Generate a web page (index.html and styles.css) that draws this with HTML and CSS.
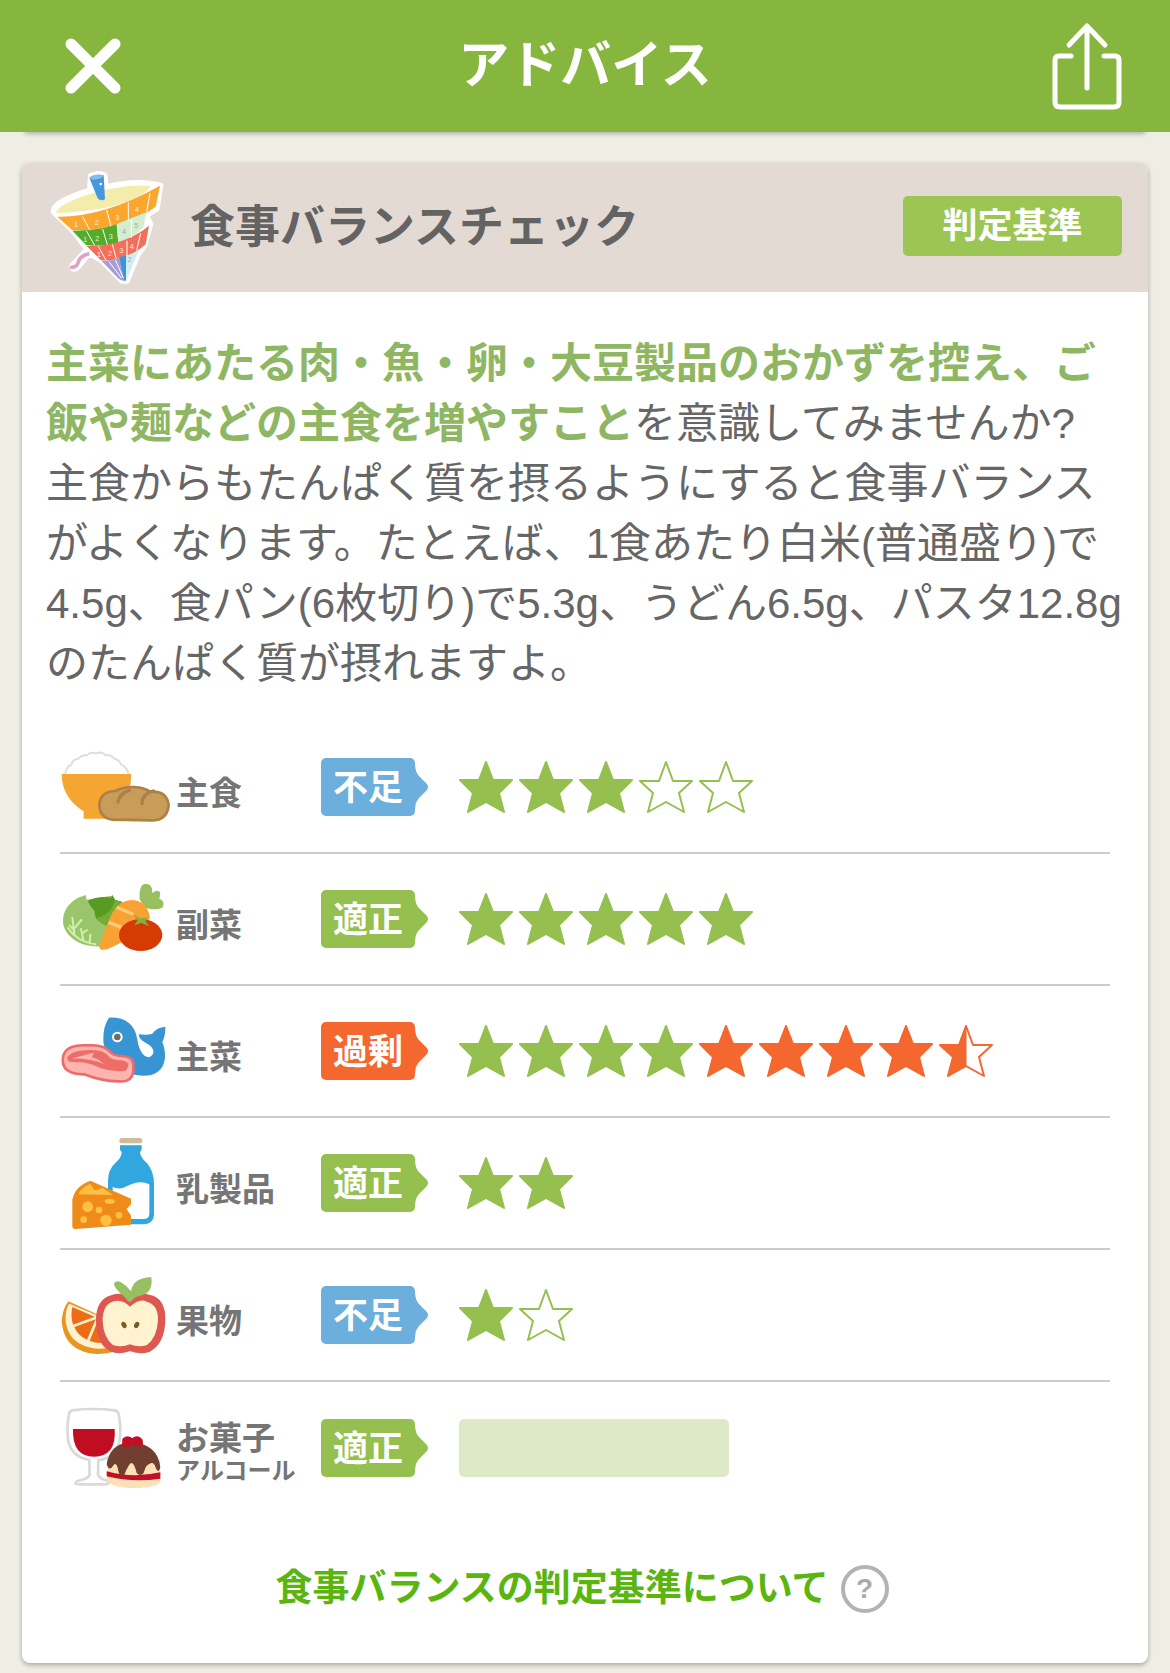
FILE: index.html
```
<!DOCTYPE html>
<html lang="ja">
<head>
  <meta charset="UTF-8">
  <meta name="viewport" content="width=device-width, initial-scale=1">
  <title>アドバイス</title>
  <link rel="stylesheet" href="styles.css">
</head>
<body>
  <!-- star shapes shared by every row -->
  <svg class="defs" width="0" height="0" aria-hidden="true">
    <symbol id="star" viewBox="0 0 54 54">
      <path d="M27 2 34 20H53L40 33 45 52 27 42 9 52 14 33 1 20H20Z" fill="currentColor" stroke="currentColor" stroke-width="2" stroke-linejoin="round"/>
    </symbol>
    <symbol id="star-empty" viewBox="0 0 54 54">
      <path d="M27 2 34 21H53L40 33 45 52 27 42 9 52 14 33 1 21H20Z" fill="none" stroke="currentColor" stroke-width="2" stroke-linejoin="round"/>
    </symbol>
    <symbol id="star-half" viewBox="0 0 54 54">
      <path d="M27 2 34 21H53L40 33 45 52 27 42 9 52 14 33 1 21H20Z" fill="none" stroke="currentColor" stroke-width="2" stroke-linejoin="round"/>
      <path d="M27 2V42L9 52 14 33 1 21H20Z" fill="currentColor" stroke="currentColor" stroke-linejoin="round"/>
    </symbol>
  </svg>

  <header class="navbar">
    <button class="nav-btn" type="button" aria-label="閉じる">
      <svg width="56" height="56" viewBox="0 0 56 56"><path d="M6 6 50 50M50 6 6 50" stroke="#fff" stroke-width="11" stroke-linecap="round"/></svg>
    </button>
    <h1>アドバイス</h1>
    <button class="nav-btn share" type="button" aria-label="共有">
      <svg width="70" height="88" viewBox="0 0 70 88" fill="none" stroke="#fff" stroke-width="5" stroke-linecap="round" stroke-linejoin="round"><path d="M19 34H7Q3 34 3 38V80Q3 85 8 85H62Q67 85 67 80V38Q67 34 63 34H52"/><path d="M35 66V4M17 23 35 4 53 23"/></svg>
    </button>
  </header>
  <div class="card-tail"></div>

  <main class="card">
    <div class="card-head">
      <svg class="koma" width="120" height="118" viewBox="60 25 360 354" aria-hidden="true">
        <path d="M181 45Q205 32 225 43L229 78Q300 58 365 68L393 73 382 145 350 165 363 190 345 255 325 282 292 362 275 362 215 302 178 280 145 320Q125 335 125 315L170 265 125 208 70 155Q60 125 178 88Z" fill="#fff" stroke="#fff" stroke-width="14" stroke-linejoin="round"/>
        <path d="M78 157Q85 130 180 100T360 75Q355 100 280 126T78 157Z" fill="#f3ecab"/>
        <path d="M82 168Q220 170 390 75L377 138Q280 210 127 209Z" fill="#fba62f"/>
        <path d="M127 210Q220 208 260 190L265 247Q220 258 169 254Z" fill="#54ac2a"/>
        <path d="M260 190 350 154 340 200Q310 234 265 247Z" fill="#d5edd0"/>
        <path d="M170 256Q280 258 357 195L347 251Q290 302 213 299Z" fill="#f2705a"/>
        <path d="M215 301Q250 300 270 289L282 360Q270 360 260 348Z" fill="#a99bd6"/>
        <path d="M268 289 289 285 288 360 282 360Z" fill="#3896dc"/>
        <path d="M289 285 325 271 290 358Z" fill="#d2edf3"/>
        <path d="M178 279Q150 285 145 304T120 319" fill="none" stroke="#dca3c5" stroke-width="11"/>
        <path d="M178 51Q200 38 221 44L225 116Q212 123 203 113Z" fill="#4898dd"/>
        <ellipse cx="199" cy="49" rx="20" ry="7" fill="#82bdec" transform="rotate(-8 199 49)"/>
        <circle cx="212" cy="70" r="4" fill="#fff"/>
        <g fill="none" stroke="#fff" stroke-width="3"><path d="M158 168 180 209M230 148 243 196M295 125V178M360 97 350 154M169 210 194 254M218 205 232 252M304 178V232M205 257 228 299M247 251 259 295M291 240V286M332 218 320 269M237 303 274 352M256 298 280 352"/></g>
        <g class="koma-num"><text x="132" y="198">1</text><text x="194" y="192">2</text><text x="256" y="177">3</text><text x="314" y="154">4</text><text x="160" y="244">1</text><text x="196" y="242">2</text><text x="236" y="235">3</text><text x="201" y="290">1</text><text x="234" y="285">2</text><text x="268" y="278">3</text><text x="299" y="264">4</text></g>
        <g class="koma-num off"><text x="276" y="221">4</text><text x="313" y="202">5</text><text x="293" y="304">2</text></g>
      </svg>
      <h2>食事バランスチェック</h2>
      <button class="criteria" type="button">判定基準</button>
    </div>

    <p class="advice"><strong>主菜にあたる肉・魚・卵・大豆製品のおかずを控え、ご飯や麺などの主食を増やすこと</strong>を意識してみませんか?<br>主食からもたんぱく質を摂るようにすると食事バランスがよくなります。たとえば、1食あたり白米(普通盛り)で4.5g、食パン(6枚切り)で5.3g、うどん6.5g、パスタ12.8gのたんぱく質が摂れますよ。</p>

    <ul class="foods">
      <li>
        <svg class="food" viewBox="60 3 348 330" aria-hidden="true">
          <path d="M75 129Q80 105 94 101Q98 84 115 83Q125 70 140 73Q152 61 168 67Q185 60 197 73Q214 70 223 83Q239 86 243 101Q260 108 266 129" fill="#fff" stroke="#dedede" stroke-width="6"/>
          <path d="M65 129H273Q275 185 245 210Q215 235 207 263H131V241Q65 200 65 129Z" fill="#f5a532"/>
          <path d="M218 266Q178 260 178 221Q181 181 226 180Q250 167 282 168Q314 170 330 182Q381 178 386 223Q382 266 340 268Z" fill="#c89c59" stroke="#ae8046" stroke-width="8"/>
          <path d="M234 213Q238 188 268 178M306 218Q306 188 340 180" fill="none" stroke="#ae8046" stroke-width="10" stroke-linecap="round"/>
        </svg>
        <span class="name">主食</span>
        <span class="tag low">不足</span>
        <span class="stars" role="img" aria-label="5つ中3つ"><svg><use href="#star"/></svg><svg><use href="#star"/></svg><svg><use href="#star"/></svg><svg><use href="#star-empty"/></svg><svg><use href="#star-empty"/></svg></span>
      </li>
      <li>
        <svg class="food" viewBox="60 12 348 330" aria-hidden="true">
          <path d="M137 105 140 119 215 107 226 121 247 125 225 220 180 259Q115 262 82 220Q60 190 74 155Q90 118 137 105Z" fill="#9ac56a"/>
          <path d="M143 123Q175 107 213 113L217 105 226 120 247 126Q218 155 199 197Q160 180 164 154Q154 144 143 123Z" fill="#599a23"/>
          <path d="M247 126Q218 155 199 197Q180 190 170 174Q209 164 218 138L225 120Z" fill="#72ad38"/>
          <path d="M84 204Q110 244 166 253M103 222 97 173M103 211 89 197M103 205 124 180M130 240 123 207M127 220 141 210M149 249 151 224" fill="none" stroke="#d3efad" stroke-width="6" stroke-linecap="round"/>
          <path d="M299 118Q296 71 318 71Q338 72 337 99Q355 85 361 99L358 116Q372 121 370 134Q372 149 335 148L314 143Z" fill="#98bf60"/>
          <path d="M177 257 206 184Q226 125 272 120Q321 120 330 173Q310 220 203 267Q177 275 177 257Z" fill="#f8a234"/>
          <path d="M230 142 280 163M206 187 244 202" stroke="#ffcb77" stroke-width="10"/>
          <ellipse cx="302" cy="225" rx="65" ry="48" fill="#d63a05"/>
          <path d="M281 162 298 175 323 173 317 184 327 199 304 189 283 196 292 182Z" fill="#8aad3d"/>
        </svg>
        <span class="name">副菜</span>
        <span class="tag good">適正</span>
        <span class="stars" role="img" aria-label="5つ中5つ"><svg><use href="#star"/></svg><svg><use href="#star"/></svg><svg><use href="#star"/></svg><svg><use href="#star"/></svg><svg><use href="#star"/></svg></span>
      </li>
      <li>
        <svg class="food" viewBox="60 15 348 330" aria-hidden="true">
          <path d="M207 80Q280 77 292 145C294 166 306 200 328 199C350 188 340 167 319 157Q296 145 296 130Q323 133 337 128Q350 109 376 107Q377 131 367 154Q376 175 375 200Q369 254 309 254Q245 253 235 201Q190 188 190 148Q189 105 207 80Z" fill="#3795d3"/>
          <circle cx="232" cy="138" r="16" fill="#fff"/><circle cx="232" cy="138" r="10" fill="#706c69"/>
          <path d="M69 199Q74 159 147 163Q190 160 211 183Q220 194 246 195Q281 198 280 220V242Q275 275 238 271Q190 272 132 250Q62 250 69 199Z" fill="#ffb4af" stroke="#ed6b68" stroke-width="8"/>
          <path d="M82 199Q96 177 151 177Q190 176 206 196Q214 207 244 208Q278 213 257 239Q220 245 181 231Q141 211 109 214Q77 215 82 199Z" fill="#ed6d69"/>
          <path d="M96 202Q134 191 163 185L155 199Q176 204 192 220Q160 203 96 202Z" fill="#ffb4af"/>
        </svg>
        <span class="name">主菜</span>
        <span class="tag over">過剰</span>
        <span class="stars" role="img" aria-label="適量4つ、超過4つ半"><svg><use href="#star"/></svg><svg><use href="#star"/></svg><svg><use href="#star"/></svg><svg><use href="#star"/></svg><svg class="excess"><use href="#star"/></svg><svg class="excess"><use href="#star"/></svg><svg class="excess"><use href="#star"/></svg><svg class="excess"><use href="#star"/></svg><svg class="excess"><use href="#star-half"/></svg></span>
      </li>
      <li>
        <svg class="food" viewBox="60 21 348 330" aria-hidden="true">
          <rect x="238" y="51" width="69" height="16" rx="7" fill="#ccbd9b"/>
          <path d="M240 73H305V86L300 94Q301 109 321 127Q342 150 342 190V283Q340 310 308 310H204V180Q204 145 226 126Q245 110 245 94L240 86Z" fill="#30a7de"/>
          <path d="M218 198Q240 208 263 194Q300 175 328 190V278Q328 294 310 294H218Z" fill="#fff"/>
          <path d="M97 236Q105 195 151 179L273 233V250L260 264 273 284V311L106 324Q97 324 97 315Z" fill="#ee8b19"/>
          <path d="M115 220Q125 198 151 189L164 208 188 201 218 222Z" fill="#ffc044"/>
          <g fill="#ffc044"><circle cx="143" cy="257" r="16"/><circle cx="177" cy="267" r="10"/><circle cx="198" cy="298" r="17"/><circle cx="131" cy="296" r="10"/><circle cx="237" cy="283" r="10"/><ellipse cx="209" cy="241" rx="15" ry="8"/></g>
        </svg>
        <span class="name">乳製品</span>
        <span class="tag good">適正</span>
        <span class="stars" role="img" aria-label="2つ中2つ"><svg><use href="#star"/></svg><svg><use href="#star"/></svg></span>
      </li>
      <li>
        <svg class="food" viewBox="60 12 348 330" aria-hidden="true">
          <path d="M85 136Q67 160 65 195Q70 260 118 281Q160 302 215 289L205 190Z" fill="#e89521"/>
          <path d="M87 143Q75 165 77 195Q83 245 123 265Q160 284 205 276L200 190Z" fill="#fff2cf"/>
          <path d="M97 153 164 182 99 206Q91 179 97 153ZM103 213 167 190 141 251Q113 239 103 213ZM149 254 174 193 202 259Q173 264 149 254Z" fill="#ef6c16"/>
          <path d="M270 134Q300 113 326 125Q369 133 367 194Q365 258 325 279Q298 287 270 276Q240 288 214 278Q179 259 177 194Q176 135 220 125Q245 116 270 134Z" fill="#de5850" stroke="#de5850" stroke-width="18" stroke-linejoin="round"/>
          <path d="M270 152Q300 125 320 137Q355 145 354 193Q351 245 321 267Q297 276 270 265Q244 276 219 267Q190 245 188 194Q188 145 222 136Q247 128 270 152Z" fill="#fff4cf"/>
          <path d="M222 82Q230 72 243 79Q262 90 273 106Q278 66 334 63Q341 113 299 119Q280 124 271 139Q261 136 257 126Q220 96 222 82Z" fill="#97c062"/>
          <ellipse cx="252" cy="207" rx="7" ry="10" fill="#785929" transform="rotate(-30 252 207)"/><ellipse cx="290" cy="207" rx="7" ry="10" fill="#785929" transform="rotate(30 290 207)"/>
        </svg>
        <span class="name">果物</span>
        <span class="tag low">不足</span>
        <span class="stars" role="img" aria-label="2つ中1つ"><svg><use href="#star"/></svg><svg><use href="#star-empty"/></svg></span>
      </li>
      <li>
        <svg class="food" viewBox="60 18 348 330" aria-hidden="true">
          <path d="M96 70Q160 62 226 70Q234 72 236 82Q245 125 238 163Q226 214 175 219L174 264Q180 276 202 281Q212 292 196 292H120Q98 292 112 282Q144 276 149 264L148 219Q96 210 85 164Q79 125 87 82Q88 72 96 70Z" fill="#fff" stroke="#d9d9d9" stroke-width="8" stroke-linejoin="round"/>
          <path d="M99 126H224Q230 208 162 209Q96 208 99 126Z" fill="#c00d22"/>
          <path d="M202 250H361V284Q350 302 282 303Q208 302 200 278Z" fill="#fee0b8"/>
          <path d="M202 218H361L358 257H204Z" fill="#fee0b8"/>
          <path d="M200 253Q280 275 361 256V275Q280 288 200 268Z" fill="#c10f26"/>
          <path d="M200 232Q209 171 270 165Q353 169 361 241Q356 263 347 242Q341 221 327 232Q318 233 311 258Q301 270 290 258Q279 213 267 235Q257 250 252 266Q240 274 235 252Q230 223 221 234Q208 256 200 232Z" fill="#713f30"/>
          <path d="M246 176 247 155Q260 141 277 153Q294 141 308 158L309 172 298 181 277 171 264 184Z" fill="#c10f26"/>
        </svg>
        <span class="name">お菓子<small>アルコール</small></span>
        <span class="tag good">適正</span>
        <span class="bar"></span>
      </li>
    </ul>

    <a class="about" href="#">食事バランスの判定基準について<span class="help">?</span></a>
  </main>
</body>
</html>
```

FILE: styles.css
```
* { box-sizing: border-box; }
body { margin: 0; background: #efede4; color: #666; font-family: "Liberation Sans", "Noto Sans CJK JP", sans-serif; }
h1, h2, p, ul { margin: 0; padding: 0; }
button { border: none; font-family: inherit; cursor: pointer; }
svg { display: block; }
.defs { position: absolute; }

.navbar { position: relative; z-index: 1; display: flex; align-items: center; justify-content: space-between; height: 132px; padding: 0 48px; background: #87b63f; color: #fff; }
.navbar h1 { font-size: 51px; font-weight: bold; line-height: 60px; }
.nav-btn { display: flex; justify-content: center; width: 90px; padding: 0; background: none; }
.share { justify-content: flex-end; }
.card-tail { height: 8px; margin: -8px 24px 31px; border-radius: 6px; box-shadow: 0 2px 4px rgba(0, 0, 0, .25); }

.card { margin: 0 22px 13px; background: #fff; border-radius: 8px; box-shadow: 0 2px 5px rgba(0, 0, 0, .3); }
.card-head { display: flex; align-items: center; height: 129px; padding: 0 26px 4px 28px; background: #e3dad3; border-radius: 8px 8px 0 0; }
.card-head h2 { flex: 1; margin-left: 20px; padding-top: 4px; font-size: 45px; font-weight: bold; line-height: 60px; color: #636363; }
.koma { margin-top: 4px; }
.koma-num { fill: #fff; opacity: .8; font-size: 22px; }
.koma-num.off { fill: #999; }
.criteria { width: 219px; height: 60px; padding: 0; background: #9bc653; border-radius: 5px; color: #fff; font-size: 35px; font-weight: bold; line-height: 60px; }

.advice { padding: 42px 24px 0; font-size: 42px; line-height: 60px; }
.advice strong { color: #8fb763; }

.foods { margin: 28px 38px 0; list-style: none; }
.foods li { display: grid; grid-template-columns: 116px 145px 138px 1fr; align-items: center; height: 132px; border-bottom: 2px solid #ccc; }
.foods li:last-child { border-bottom: none; }
.food { width: 116px; height: 110px; }
.name { padding-top: 14px; color: #757575; font-size: 33px; font-weight: bold; line-height: 32px; }
.name small { display: block; font-size: 24px; line-height: 32px; }
.tag { position: relative; width: 94px; height: 58px; border-radius: 5px; color: #fff; font-size: 35px; font-weight: bold; line-height: 60px; text-align: center; }
.tag::after { content: ""; position: absolute; left: 93px; top: 0; width: 15px; height: 58px; background: inherit; clip-path: path("M0 5 L1 5 Q1 15 6 19 L13 26 Q15 29 13 32 L6 39 Q1 43 1 53 L0 53 Z"); }
.low { background: #6caedc; }
.good { background: #95bf4f; }
.over { background: #f4672f; }
.stars { display: flex; gap: 6px; color: #95bf4f; }
.stars svg { width: 54px; height: 54px; }
.stars .excess { color: #f4672f; }
.bar { width: 270px; height: 58px; background: #dceac8; border-radius: 5px; }

.about { display: flex; align-items: center; justify-content: center; gap: 12px; padding: 50px 6px 49px 0; color: #5bb50f; font-size: 37px; font-weight: bold; line-height: 50px; text-decoration: none; }
.help { width: 48px; height: 48px; border: 4px solid #b3b3b3; border-radius: 50%; color: #aaa; font-size: 28px; line-height: 40px; text-align: center; }
```
